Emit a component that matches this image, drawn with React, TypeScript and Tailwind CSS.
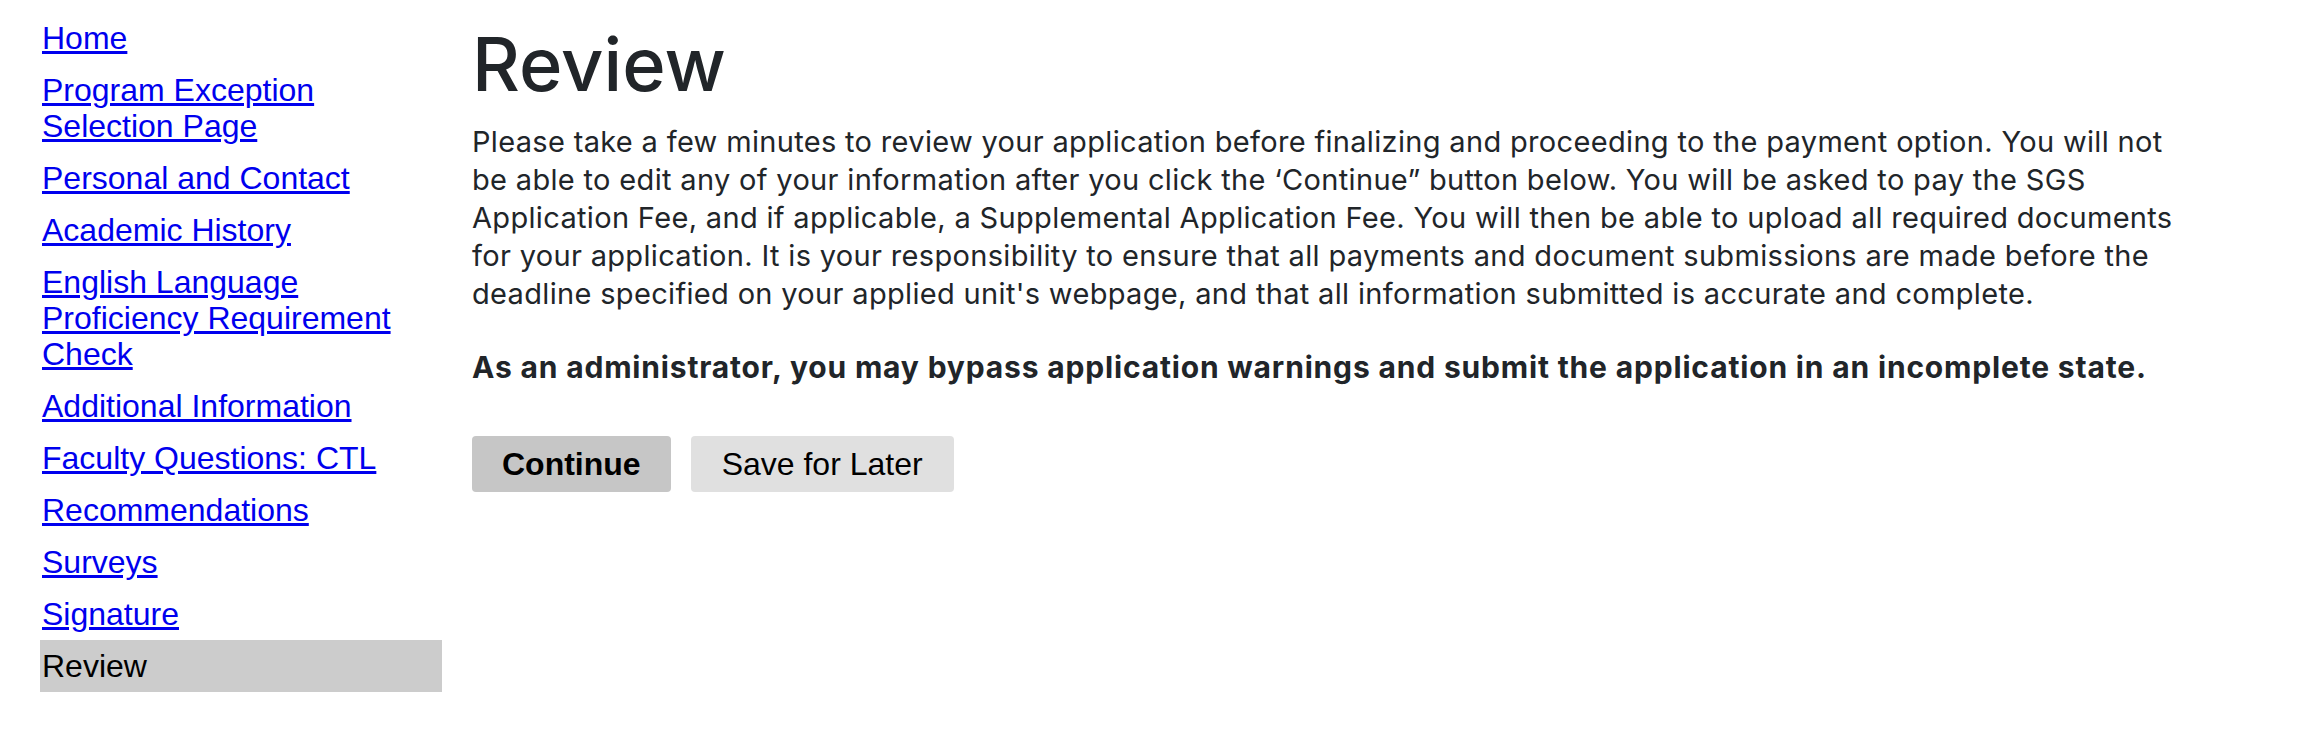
import React from "react";

const navItems = [
  "Home",
  "Program Exception Selection Page",
  "Personal and Contact",
  "Academic History",
  "English Language Proficiency Requirement Check",
  "Additional Information",
  "Faculty Questions: CTL",
  "Recommendations",
  "Surveys",
  "Signature",
];

export default function App() {
  return (
    <div className="flex gap-[30px] pt-3 pl-[40px] bg-white min-h-[746px]">
      <nav className="w-[402px] shrink-0 font-['Liberation_Sans',Arial,sans-serif] text-[32px] leading-[36px]">
        <ul>
          {navItems.map((item) => (
            <li key={item} className="py-2 px-[2px]">
              <a href="#" className="text-[#0000ee] underline">
                {item}
              </a>
            </li>
          ))}
          <li className="py-2 px-[2px] bg-[#cccccc] text-black">Review</li>
        </ul>
      </nav>
      <main className="w-[1715px] shrink-0 text-[#212529] font-['Inter','Liberation_Sans',sans-serif]">
        <h1 className="mt-2 text-[74px] leading-[89px] font-medium">Review</h1>
        <p className="mt-[14px] text-[29px] leading-[38px] tracking-[0.33px]">
          Please take a few minutes to review your application before finalizing and proceeding to the
          payment option. You will not be able to edit any of your information after you click the
          ‘Continue” button below. You will be asked to pay the SGS Application Fee, and if applicable, a
          Supplemental Application Fee. You will then be able to upload all required documents for your
          application. It is your responsibility to ensure that all payments and document submissions are
          made before the deadline specified on your applied unit's webpage, and that all information
          submitted is accurate and complete.
        </p>
        <p className="mt-[35px] text-[30px] leading-[38px] font-bold tracking-[0.83px]">
          As an administrator, you may bypass application warnings and submit the application in an
          incomplete state.
        </p>
        <div className="mt-[50px] flex gap-5 font-['Liberation_Sans',Arial,sans-serif] text-[32px] leading-[36px] text-black">
          <button className="px-[30px] py-[10px] rounded bg-[#c6c6c6] font-bold">Continue</button>
          <button className="px-[31px] py-[10px] rounded bg-[#e0e0e0]">Save for Later</button>
        </div>
      </main>
    </div>
  );
}
